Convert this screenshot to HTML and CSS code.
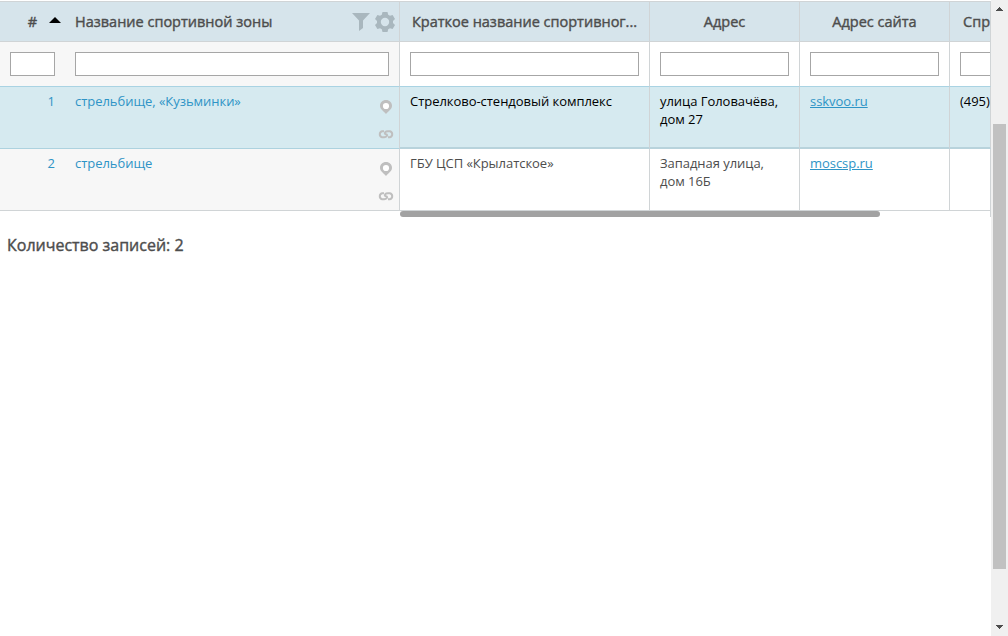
FILE: index.html
```html
<!DOCTYPE html>
<html lang="ru">
<head>
<meta charset="utf-8">
<title>Спортивные зоны</title>
<link rel="stylesheet" href="styles.css">
</head>
<body>
<svg class="sprite" width="0" height="0">
  <symbol id="pin" viewBox="0 0 14 16"><path d="M7 1C3.500 1 1 3.500 1 6.800C1 10 4 11.700 7 15C10 11.700 13 10 13 6.800C13 3.500 10.500 1 7 1Z"/><circle class="hole" cx="7" cy="7" r="3.100"/></symbol>
  <symbol id="link" viewBox="0 0 16 9"><path class="stroke" d="M10 7.200H11.900A3.100 3.100 0 0 0 11.900 1.200H9.800C7.500 1.200 6.200 3 7.200 3.900L8.800 4.500C9.800 5.400 8.500 7.200 6.200 7.200H4.100A3.100 3.100 0 0 1 4.100 1.200H6"/></symbol>
</svg>
<div class="page">
  <main class="content">
    <div class="table">
      <div class="row head">
        <div class="cell num"><span>#</span><i class="sort"></i></div>
        <div class="cell name"><span>Название спортивной зоны</span>
          <span class="tools">
            <svg width="18" height="18" viewBox="0 0 18 18"><path d="M0 0H18L11 7.500V15L7 18V7.500Z"/></svg>
            <svg width="20" height="20" viewBox="0 0 20 20"><path fill-rule="evenodd" d="M7.500 0H12.500L13.200 2.700L15 3.700L17.600 3L20 7L18 9V11L20 13L17.600 17L15 16.300L13.200 17.300L12.500 20H7.500L6.800 17.300L5 16.300L2.400 17L0 13L2 11V9L0 7L2.400 3L5 3.700L6.800 2.700ZM10 5.800A4.200 4.200 0 1 0 10 14.200A4.200 4.200 0 1 0 10 5.800Z"/></svg>
          </span>
        </div>
        <div class="cell">Краткое название спортивног...</div>
        <div class="cell">Адрес</div>
        <div class="cell">Адрес сайта</div>
        <div class="cell last">Спр</div>
      </div>
      <div class="row filter">
        <div class="cell num"><input></div>
        <div class="cell name"><input></div>
        <div class="cell"><input></div>
        <div class="cell"><input></div>
        <div class="cell"><input></div>
        <div class="cell last"><input class="wide"></div>
      </div>
      <div class="row data active">
        <div class="cell num">1</div>
        <div class="cell name"><span>стрельбище, «Кузьминки»</span><span class="marks"><svg width="14" height="16"><use href="#pin"/></svg><svg width="16" height="9"><use href="#link"/></svg></span></div>
        <div class="cell">Стрелково-стендовый комплекс</div>
        <div class="cell">улица Головачёва, дом 27</div>
        <div class="cell"><a href="#">sskvoo.ru</a></div>
        <div class="cell last">(495)</div>
      </div>
      <div class="row data">
        <div class="cell num">2</div>
        <div class="cell name"><span>стрельбище</span><span class="marks"><svg width="14" height="16"><use href="#pin"/></svg><svg width="16" height="9"><use href="#link"/></svg></span></div>
        <div class="cell">ГБУ ЦСП «Крылатское»</div>
        <div class="cell">Западная улица, дом 16Б</div>
        <div class="cell"><a href="#">moscsp.ru</a></div>
        <div class="cell last"></div>
      </div>
    </div>
    <div class="hscroll"><div class="hthumb"></div></div>
    <div class="total">Количество записей: 2</div>
  </main>
  <aside class="vscroll">
    <svg width="7" height="4" viewBox="0 0 7 4" shape-rendering="crispEdges"><path d="M3 0h1v1h1v1h1v1h1v1h-7v-1h1v-1h1v-1h1z"/></svg>
    <div class="vthumb"></div>
    <svg width="7" height="4" viewBox="0 0 7 4" shape-rendering="crispEdges"><path d="M0 0h7v1h-1v1h-1v1h-1v1h-1v-1h-1v-1h-1v-1h-1z"/></svg>
  </aside>
</div>
</body>
</html>
```
FILE: styles.css
```css
* { box-sizing: border-box; }
body { margin: 0; overflow: hidden; background: #fff; color: #4d4d4d; font: 13px/18px "Open Sans", "Noto Sans", sans-serif; }
.sprite { position: absolute; }
.page { display: flex; height: 636px; }
.content { width: 991px; padding-top: 1px; overflow: hidden; }
.row { display: grid; grid-template-columns: 65px 335px 250px 150px 150px 41px; }
.cell { min-width: 0; padding: 0 10px; border-right: 1px solid #d0d4d6; border-bottom: 1px solid #d0d4d6; overflow: hidden; }
.num { border-right: 0; }
.last { padding-right: 0; white-space: nowrap; }

.head { height: 41px; background: #d6e4eb; border-top: 1px solid #d0d4d6; font-size: 14.5px; line-height: 20px; -webkit-text-stroke: .4px #4d4d4d; }
.head .cell { display: flex; align-items: center; justify-content: center; padding-top: 1px; white-space: nowrap; }
.head .num { justify-content: flex-end; gap: 12px; padding-right: 4px; }
.head .name { justify-content: space-between; padding-right: 4px; }
.head .last { justify-content: flex-start; padding-left: 13px; }
.sort { margin-top: -5px; border: 6px solid transparent; border-top: 0; border-bottom: 6px solid #000; }
.tools { display: flex; align-items: center; gap: 5px; fill: #a9b7be; -webkit-text-stroke: 0; }

.filter { height: 45px; }
.filter .cell { padding-top: 10px; border-bottom-color: #a9d3e3; }
.filter .num, .filter .name { background: #f7f7f7; }
input { display: block; width: 100%; height: 24px; margin: 0; padding: 0; border: 1px solid #a6a6a6; border-radius: 0; background: #fff; }
.wide { width: 60px; }

.data { height: 62px; letter-spacing: -.04px; }
.data .cell { padding-top: 5px; }
.data .num, .data .name { background: #f7f7f7; color: #2e94c6; }
.data .num { text-align: right; }
.data .name { display: flex; justify-content: space-between; padding-right: 5px; }
.marks { display: flex; flex-direction: column; align-items: center; gap: 15px; padding-top: 7px; fill: #bfbfbf; }
.hole { fill: #fff; }
.stroke { fill: none; stroke: #bfbfbf; stroke-width: 2; }
.active { color: #000; }
.active .cell, .active .num, .active .name { background: #d6eaf0; }
.active .cell { border-bottom: 2px solid #b8d3dc; }
.active .num, .active .name { border-bottom: 1px solid #add2df; }
a { color: #2e94c6; }

.hscroll { height: 6px; padding-left: 400px; border-right: 1px solid #d0d4d6; }
.hthumb { width: 480px; height: 6px; border-radius: 3px; background: #a2a2a2; }
.total { padding: 17px 7px; font-size: 16px; line-height: 22px; -webkit-text-stroke: .4px #4d4d4d; }

.vscroll { display: flex; flex-direction: column; align-items: center; justify-content: space-between; width: 17px; padding: 7px 0; background: #f0f0f0; fill: #4d4d4d; }
.vthumb { width: 13px; height: 445px; margin-top: 56px; background: #c1c1c1; }
```
